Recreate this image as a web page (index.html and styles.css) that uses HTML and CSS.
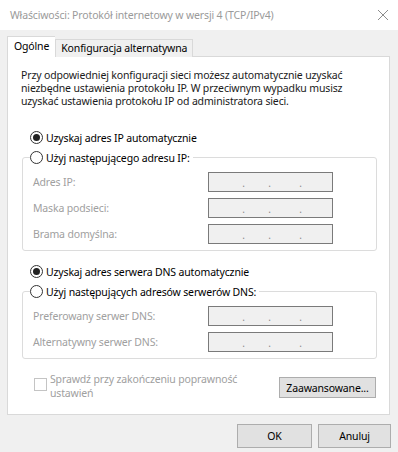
FILE: index.html
```html
<!DOCTYPE html>
<html lang="pl">
  <head>
    <meta charset="UTF-8" />
    <title>Właściwości: Protokół internetowy w wersji 4 (TCP/IPv4)</title>
    <link rel="stylesheet" href="styles.css">
  </head>
  <body>
    <div class="titlebar">
      <span class="title">Właściwości: Protokół internetowy w wersji 4 (TCP/IPv4)</span>
      <svg class="close" width="12" height="12" viewBox="0 0 12 12">
        <path d="M1 1 L11 11 M11 1 L1 11" stroke="#8c8c8c" stroke-width="1" fill="none" />
      </svg>
    </div>

    <div class="tabs">
      <div class="tab active">Ogólne</div>
      <div class="tab">Konfiguracja alternatywna</div>
    </div>

    <div class="panel">
      <p class="intro">
        Przy odpowiedniej konfiguracji sieci możesz automatycznie uzyskać<br>
        niezbędne ustawienia protokołu IP. W przeciwnym wypadku musisz<br>
        uzyskać ustawienia protokołu IP od administratora sieci.
      </p>

      <div class="radio-row first">
        <span class="radio checked"></span>
        <span>Uzyskaj adres IP automatycznie</span>
      </div>

      <fieldset class="group">
        <legend class="radio-row">
          <span class="radio"></span>
          <span>Użyj następującego adresu IP:</span>
        </legend>
        <div class="field">
          <span class="label">Adres IP:</span>
          <span class="ip"><i class="s1"></i><b>.</b><i class="s2"></i><b>.</b><i class="s3"></i><b>.</b></span>
        </div>
        <div class="field">
          <span class="label">Maska podsieci:</span>
          <span class="ip"><i class="s1"></i><b>.</b><i class="s2"></i><b>.</b><i class="s3"></i><b>.</b></span>
        </div>
        <div class="field">
          <span class="label">Brama domyślna:</span>
          <span class="ip"><i class="s1"></i><b>.</b><i class="s2"></i><b>.</b><i class="s3"></i><b>.</b></span>
        </div>
      </fieldset>

      <div class="radio-row second">
        <span class="radio checked"></span>
        <span>Uzyskaj adres serwera DNS automatycznie</span>
      </div>

      <fieldset class="group">
        <legend class="radio-row">
          <span class="radio"></span>
          <span>Użyj następujących adresów serwerów DNS:</span>
        </legend>
        <div class="field">
          <span class="label">Preferowany serwer DNS:</span>
          <span class="ip"><i class="s1"></i><b>.</b><i class="s2"></i><b>.</b><i class="s3"></i><b>.</b></span>
        </div>
        <div class="field">
          <span class="label">Alternatywny serwer DNS:</span>
          <span class="ip"><i class="s1"></i><b>.</b><i class="s2"></i><b>.</b><i class="s3"></i><b>.</b></span>
        </div>
      </fieldset>

      <div class="check-row">
        <span class="checkbox"></span>
        <span class="check-label">Sprawdź przy zakończeniu poprawność<br>ustawień</span>
        <button class="btn advanced">Zaawansowane...</button>
      </div>
    </div>

    <div class="footer">
      <button class="btn dialog">OK</button>
      <button class="btn dialog">Anuluj</button>
    </div>
  </body>
</html>
```

FILE: styles.css
```css
* {
  box-sizing: border-box;
}

body {
  margin: 0;
  width: 398px;
  height: 452px;
  overflow: hidden;
  background: #f0f0f0;
  font-family: "Noto Sans", "Liberation Sans", sans-serif;
  font-size: 10.5px;
  letter-spacing: -0.15px;
  color: #000;
}

.titlebar {
  height: 30px;
  background: #fff;
  display: flex;
  align-items: center;
  justify-content: space-between;
  padding: 0 9px 0 10px;
}

.title {
  color: #9a9a9a;
}

.close {
  display: block;
}

.tabs {
  display: flex;
  align-items: flex-end;
  margin: 7px 0 0 7px;
  height: 20px;
  position: relative;
  z-index: 1;
  margin-bottom: -1px;
}

.tab {
  height: 18px;
  line-height: 16px;
  padding: 0 5px;
  border: 1px solid #d9d9d9;
  border-bottom: none;
  background: #f0f0f0;
}

.tab.active {
  height: 21px;
  line-height: 19px;
  padding: 0 6px;
  background: #fff;
  border-right: none;
}

.panel {
  margin: 0 8px 0 7px;
  height: 359px;
  background: #fff;
  border: 1px solid #d9d9d9;
  padding: 12px 12px 0 13px;
}

.intro {
  margin: 0;
  line-height: 13px;
  color: #1a1a1a;
}

.radio-row {
  display: flex;
  align-items: center;
  gap: 3px;
  height: 13px;
  margin-left: 9px;
}

.radio-row.first {
  margin-top: 23px;
}

.radio-row.second {
  margin-top: 14px;
}

.radio {
  width: 13px;
  height: 13px;
  border: 1px solid #333;
  border-radius: 50%;
  display: flex;
  align-items: center;
  justify-content: center;
  flex: none;
}

.radio.checked::after {
  content: "";
  width: 7px;
  height: 7px;
  border-radius: 50%;
  background: #222;
}

.group {
  margin: 7px 0 0 1px;
  padding: 0 0 6px 10px;
  border: 1px solid #dcdcdc;
  border-radius: 3px;
}

.group legend.radio-row {
  margin-left: -3px;
  padding: 0 3px 0 0;
}

.field {
  display: grid;
  grid-template-columns: 175px 125px;
  align-items: center;
  height: 20px;
  margin-top: 6px;
}

.field:first-of-type {
  margin-top: 8px;
}

.label {
  color: #a0a0a0;
}

.ip {
  height: 20px;
  border: 1px solid #7a7a7a;
  background: #f0f0f0;
  display: flex;
  align-items: flex-end;
  color: #8a8a8a;
  font-size: 10px;
  line-height: 15px;
}

.ip i {
  flex: none;
}

.ip b {
  font-weight: normal;
  width: 3px;
  text-align: center;
}

.ip .s1 {
  width: 33px;
}

.ip .s2 {
  width: 23px;
}

.ip .s3 {
  width: 28px;
}

.check-row {
  display: flex;
  align-items: flex-start;
  margin-top: 13px;
}

.checkbox {
  width: 13px;
  height: 13px;
  border: 1px solid #c4c4c4;
  margin: 6px 3px 0 13px;
  flex: none;
}

.check-label {
  color: #a0a0a0;
  line-height: 14px;
}

.btn {
  font-family: inherit;
  font-size: 10.5px;
  letter-spacing: -0.15px;
  color: #000;
  background: #e1e1e1;
  border: 1px solid #adadad;
  padding: 0;
}

.advanced {
  margin: 5px 1px 0 auto;
  width: 97px;
  height: 21px;
}

.footer {
  display: flex;
  justify-content: flex-end;
  gap: 6px;
  margin: 9px 7px 0 0;
}

.dialog {
  width: 75px;
  height: 24px;
}

.dialog + .dialog {
  width: 73px;
}
```
